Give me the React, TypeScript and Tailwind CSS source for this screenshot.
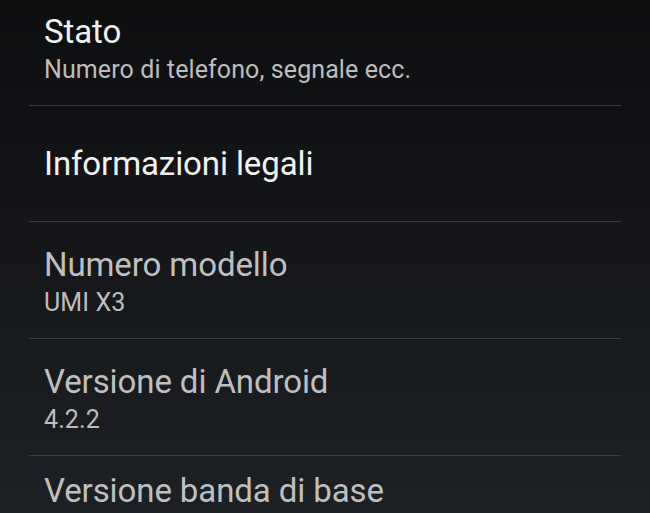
import React from "react";

const font = { fontFamily: "Roboto, 'Noto Sans', sans-serif" };

function Divider() {
  return <div className="mx-[29px] h-px bg-[#3a3c3f] shrink-0" />;
}

export default function App() {
  return (
    <div
      className="w-[650px] h-[513px] overflow-hidden bg-gradient-to-b from-[#0d0e10] to-[#1d2024] flex flex-col"
      style={font}
    >
      <div className="h-[105px] shrink-0 pl-[44px] pt-[13px]">
        <div className="text-[33px] leading-[38px] tracking-[-0.1px] text-[#f2f2f2]">Stato</div>
        <div className="text-[25px] leading-[38px] tracking-[0.1px] text-[#bdbdbd]">Numero di telefono, segnale ecc.</div>
      </div>
      <Divider />
      <div className="h-[115px] shrink-0 pl-[44px] flex items-center">
        <div className="text-[33px] leading-[38px] tracking-[-0.1px] text-[#f2f2f2]">Informazioni legali</div>
      </div>
      <Divider />
      <div className="h-[116px] shrink-0 pl-[44px] pt-[24px]">
        <div className="text-[33px] leading-[38px] tracking-[-0.1px] text-[#bfbfbf]">Numero modello</div>
        <div className="text-[25px] leading-[38px] tracking-[0.1px] text-[#bdbdbd]">UMI X3</div>
      </div>
      <Divider />
      <div className="h-[116px] shrink-0 pl-[44px] pt-[24px]">
        <div className="text-[33px] leading-[38px] tracking-[-0.1px] text-[#bfbfbf]">Versione di Android</div>
        <div className="text-[25px] leading-[38px] tracking-[0.1px] text-[#bdbdbd]">4.2.2</div>
      </div>
      <Divider />
      <div className="h-[116px] shrink-0 pl-[44px] pt-[16px]">
        <div className="text-[33px] leading-[38px] tracking-[-0.1px] text-[#bfbfbf]">Versione banda di base</div>
      </div>
    </div>
  );
}
